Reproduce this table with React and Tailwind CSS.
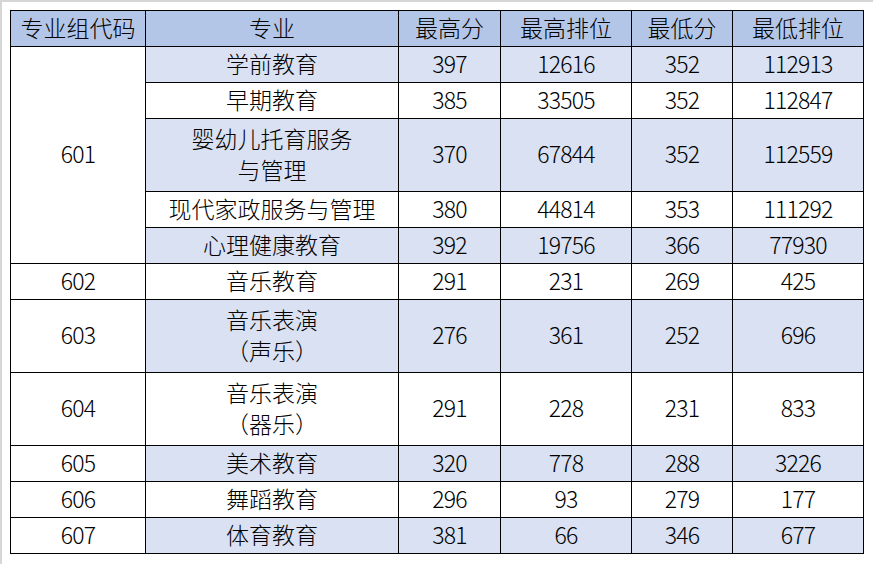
import React from "react";

const H = "bg-[#b4c6e7]";
const A = "bg-[#d9e1f2]";
const W = "bg-white";

const rows = [
  { g: "601", span: 5, m: "学前教育", v: ["397", "12616", "352", "112913"], bg: A, h: "h-[36px]" },
  { m: "早期教育", v: ["385", "33505", "352", "112847"], bg: W, h: "h-[36px]" },
  { m: ["婴幼儿托育服务", "与管理"], v: ["370", "67844", "352", "112559"], bg: A, h: "h-[73px]" },
  { m: "现代家政服务与管理", v: ["380", "44814", "353", "111292"], bg: W, h: "h-[36px]" },
  { m: "心理健康教育", v: ["392", "19756", "366", "77930"], bg: A, h: "h-[36px]" },
  { g: "602", span: 1, m: "音乐教育", v: ["291", "231", "269", "425"], bg: W, h: "h-[36px]" },
  { g: "603", span: 1, m: ["音乐表演", "（声乐）"], v: ["276", "361", "252", "696"], bg: A, h: "h-[73px]" },
  { g: "604", span: 1, m: ["音乐表演", "（器乐）"], v: ["291", "228", "231", "833"], bg: W, h: "h-[73px]" },
  { g: "605", span: 1, m: "美术教育", v: ["320", "778", "288", "3226"], bg: A, h: "h-[36px]" },
  { g: "606", span: 1, m: "舞蹈教育", v: ["296", "93", "279", "177"], bg: W, h: "h-[36px]" },
  { g: "607", span: 1, m: "体育教育", v: ["381", "66", "346", "677"], bg: A, h: "h-[36px]" },
];

const cell = "border border-black text-center align-middle p-0 pb-[3px] leading-[31px]";
const num = "tracking-[-0.8px]";

export default function App() {
  return (
    <div
      className="w-[873px] h-[564px] bg-white border-t-2 border-l-2 border-[#d6d6d6] pt-[8px] pl-[8px] text-black text-[23px] font-light"
      style={{ fontFamily: '"Noto Sans CJK SC", "Noto Sans", sans-serif' }}
    >
      <table className="table-fixed border-collapse w-[853px]">
        <colgroup>
          <col className="w-[135px]" />
          <col className="w-[253px]" />
          <col className="w-[102px]" />
          <col className="w-[131px]" />
          <col className="w-[101px]" />
          <col className="w-[131px]" />
        </colgroup>
        <thead>
          <tr className="h-[36px]">
            {["专业组代码", "专业", "最高分", "最高排位", "最低分", "最低排位"].map((t) => (
              <th key={t} className={`${cell} ${H} font-light`}>
                {t}
              </th>
            ))}
          </tr>
        </thead>
        <tbody>
          {rows.map((r, i) => (
            <tr key={i} className={r.h}>
              {r.g && (
                <td rowSpan={r.span} className={`${cell} ${num} ${W}`}>
                  {r.g}
                </td>
              )}
              <td className={`${cell} ${r.bg}`}>
                {Array.isArray(r.m) ? (
                  <>
                    {r.m[0]}
                    <br />
                    {r.m[1]}
                  </>
                ) : (
                  r.m
                )}
              </td>
              {r.v.map((x, j) => (
                <td key={j} className={`${cell} ${num} ${r.bg}`}>
                  {x}
                </td>
              ))}
            </tr>
          ))}
        </tbody>
      </table>
    </div>
  );
}
